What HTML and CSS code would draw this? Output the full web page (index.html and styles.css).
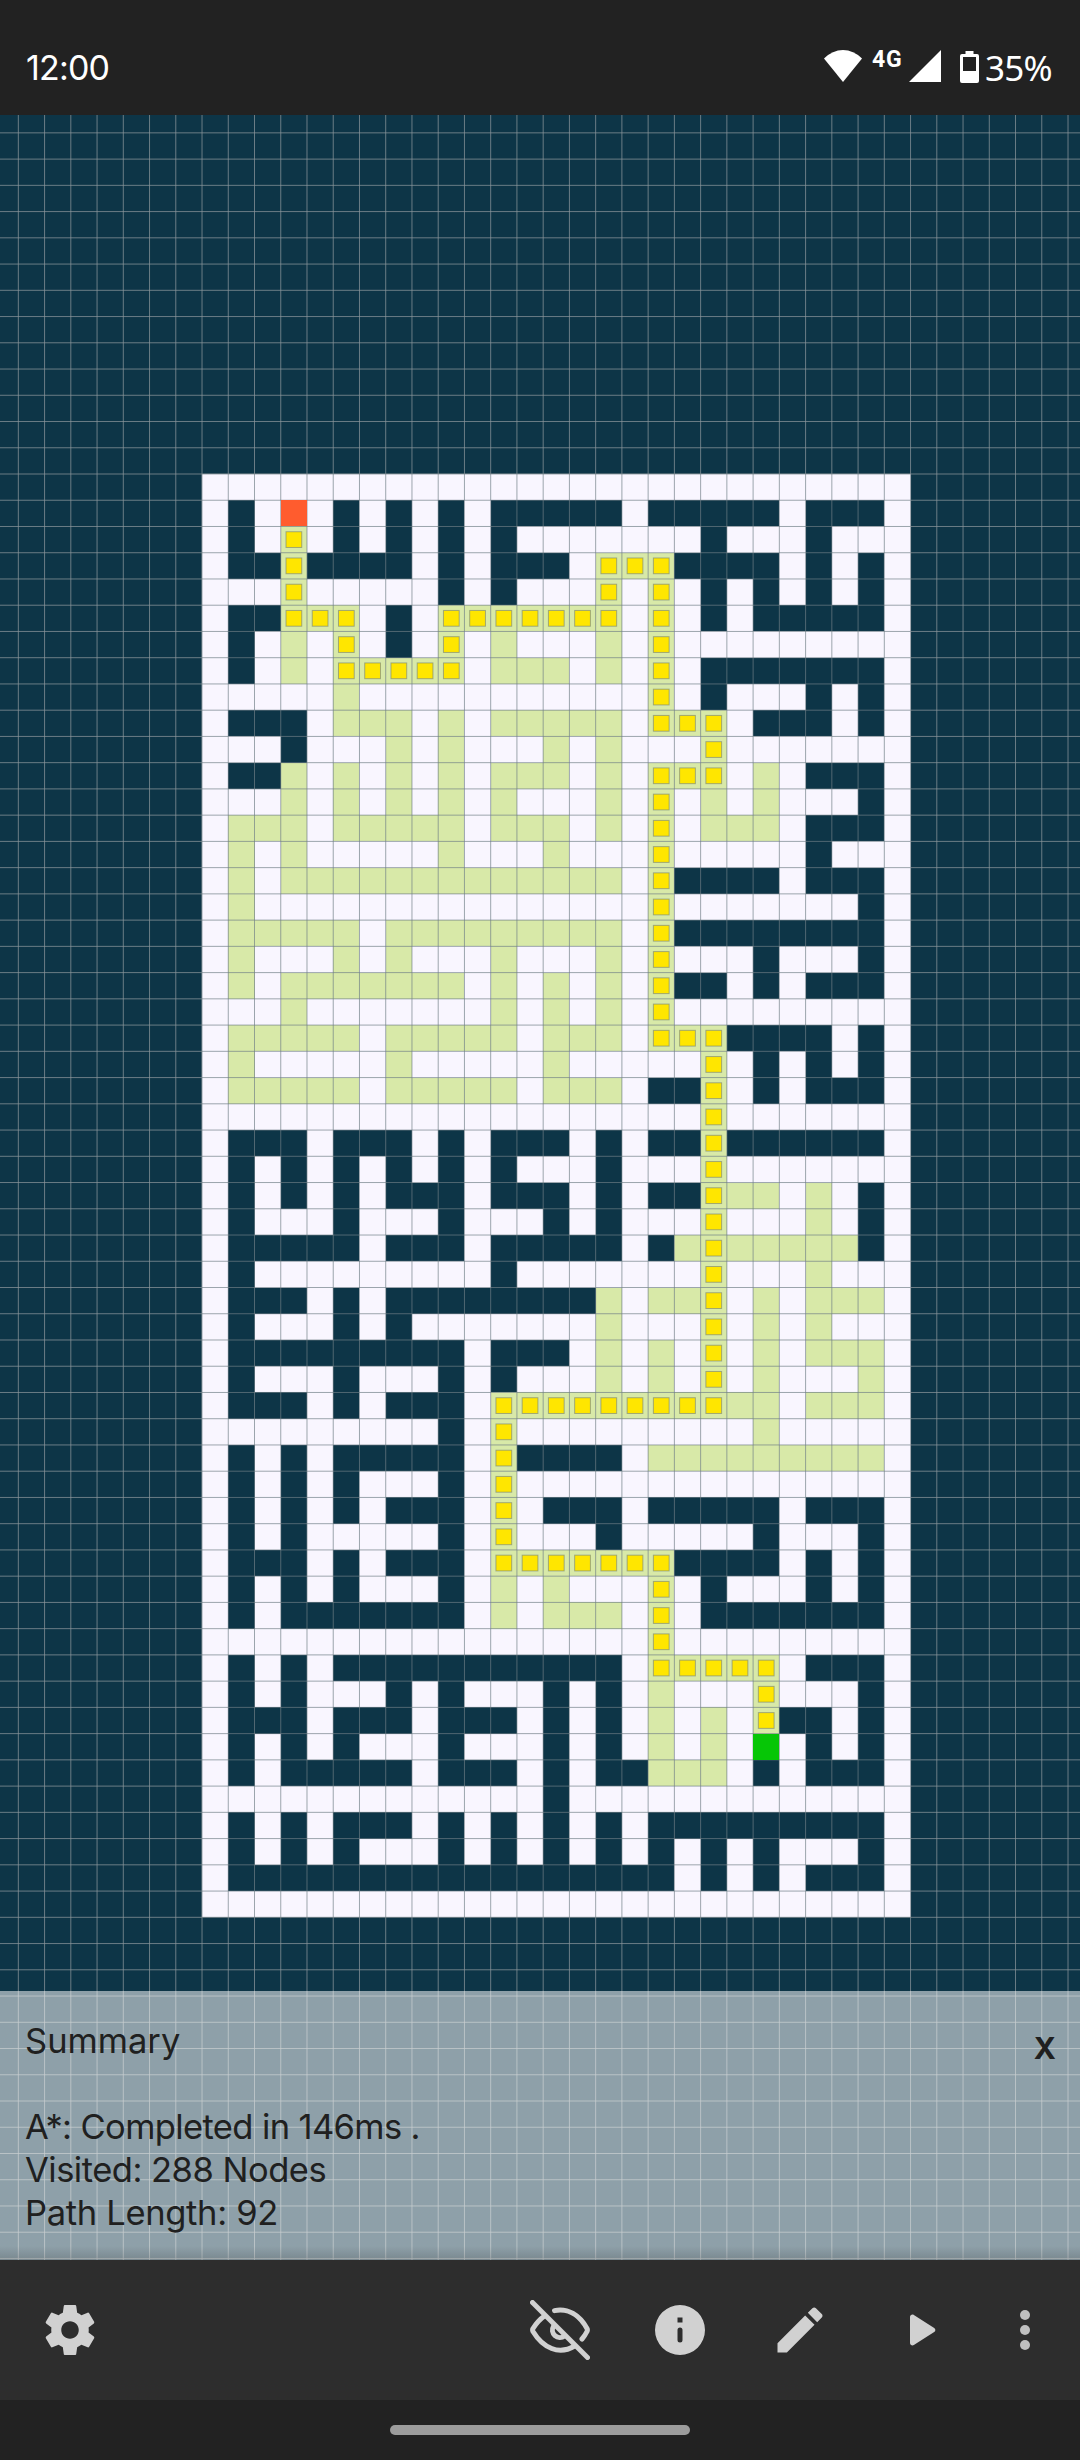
FILE: index.html
```html
<!DOCTYPE html>
<html lang="en">
<head>
<meta charset="utf-8">
<title>Pathfinder</title>
<link rel="stylesheet" href="styles.css">
</head>
<body>
<header class="status">
  <span class="clock">12:00</span>
  <div class="indicators">
    <svg class="wifi" width="38" height="32" viewBox="0 0 38 32"><path d="M0 8.500Q8.500 0 19 0Q29.500 0 38 8.500L19 32Z"/></svg>
    <span class="net">4G</span>
    <svg class="signal" width="32" height="32" viewBox="0 0 32 32"><path d="M32 0V32H0Z"/></svg>
    <svg class="battery" width="19" height="32" viewBox="0 0 19 32"><path fill-rule="evenodd" d="M5.500 0H13.500V3H17Q19 3 19 5V30Q19 32 17 32H2Q0 32 0 30V5Q0 3 2 3H5.500ZM3 6V20H16V6Z"/></svg>
    <span class="level">35%</span>
  </div>
</header>
<main class="stage">
  <svg class="board" id="board" width="1080" height="2145" viewBox="0 115 1080 2145"></svg>
  <section class="summary">
    <div class="heading"><h1>Summary</h1><button class="close">X</button></div>
    <p class="result">A*: Completed in 146ms .</p>
    <p class="visits">Visited: 288 Nodes</p>
    <p class="length">Path Length: 92</p>
  </section>
</main>
<nav class="toolbar">
  <svg class="icon settings" viewBox="0 0 24 24"><path d="M19.430 12.980c.04-.32.07-.64.07-.98s-.03-.66-.07-.98l2.110-1.650c.19-.15.24-.42.12-.64l-2-3.460c-.12-.22-.39-.3-.61-.22l-2.490 1c-.52-.4-1.080-.73-1.690-.98l-.38-2.650C14.460 2.180 14.250 2 14 2h-4c-.25 0-.46.18-.49.42l-.38 2.650c-.61.25-1.170.59-1.690.98l-2.490-1c-.23-.09-.49 0-.61.22l-2 3.460c-.13.22-.07.49.12.64l2.110 1.650c-.04.32-.07.65-.07.98s.03.66.07.98l-2.110 1.650c-.19.15-.24.42-.12.64l2 3.460c.12.22.39.3.61.22l2.490-1c.52.4 1.080.73 1.690.98l.38 2.650c.03.24.24.42.49.42h4c.25 0 .46-.18.49-.42l.38-2.650c.61-.25 1.170-.59 1.690-.98l2.490 1c.23.09.49 0 .61-.22l2-3.460c.12-.22.07-.49-.12-.64l-2.110-1.650zM12 15.500c-1.930 0-3.500-1.570-3.500-3.500s1.570-3.500 3.500-3.500 3.500 1.570 3.500 3.500-1.570 3.500-3.500 3.500z"/></svg>
  <svg class="icon hide" viewBox="0 0 60 60"><g fill="none" stroke="#d1d1d1" stroke-width="5" stroke-linecap="round" stroke-linejoin="round"><path d="M2.500 2.500L57.500 57.500"/><path d="M24.500 10.600C38 8 49.500 15 57 28.500Q57.800 30 57 31.500Q55 35.500 52 39"/><path d="M14.500 16Q8 20.500 3 28.500Q2.200 30 3 31.500C13 48 29 55.500 44.500 46"/><path d="M23.500 26.200A7.500 7.500 0 0 0 34.500 36"/></g></svg>
  <svg class="icon info" viewBox="0 0 24 24"><path fill-rule="evenodd" d="M12 2a10 10 0 1 0 0 20a10 10 0 1 0 0-20ZM11 7h2v2h-2ZM12 11q1 0 1 1v4q0 1-1 1t-1-1v-4q0-1 1-1Z"/></svg>
  <svg class="icon edit" viewBox="0 0 24 24"><path d="M3 17.250V21h3.750L17.810 9.940l-3.750-3.750L3 17.250zM20.710 7.040c.39-.39.39-1.020 0-1.410l-2.340-2.340c-.39-.39-1.020-.39-1.410 0l-1.830 1.830 3.750 3.750 1.830-1.830z"/></svg>
  <svg class="icon play" viewBox="0 0 24 24"><path d="M8 6.820v10.360c0 .79.87 1.270 1.540.84l8.140-5.180c.62-.39.62-1.290 0-1.690L9.540 5.980C8.870 5.550 8 6.030 8 6.820z"/></svg>
  <svg class="icon more" viewBox="0 0 24 24"><circle cx="12" cy="6" r="2"/><circle cx="12" cy="12" r="2"/><circle cx="12" cy="18" r="2"/></svg>
</nav>
<footer class="gesture"><div class="pill"></div></footer>
<script src="board.js"></script>
</body>
</html>
```
FILE: styles.css
```css
* { box-sizing: border-box; margin: 0; padding: 0; }
body {
  display: flex;
  flex-direction: column;
  width: 1080px;
  height: 2460px;
  background: #222;
  font-family: Inter, "Liberation Sans", sans-serif;
  color: #202020;
}
svg { display: block; flex: none; }

.status {
  display: flex;
  justify-content: space-between;
  height: 115px;
  padding: 50px 29px 0 26px;
  color: #fff;
}
.clock { font-size: 34px; line-height: 36px; letter-spacing: -0.8px; }
.indicators { display: flex; align-items: flex-start; }
.indicators svg { fill: #fff; }
.net { width: 31px; margin: 0 6px 0 10px; font: 700 23px/19px Roboto, sans-serif; letter-spacing: .8px; }
.battery { margin: 1px 6px 0 19px; }
.level { width: 66px; font: 400 35px/36px "Noto Sans", sans-serif; letter-spacing: -0.8px; white-space: nowrap; }

.stage { display: grid; height: 2145px; }
.board, .summary { grid-area: 1 / 1; }
.wall { fill: #0d3547; }
.open { fill: #f9f6ff; }
.visited, .path { fill: #d8e9a8; }
.mark { fill: #ffe600; stroke: #6f7f80; stroke-opacity: .6; }
.start { fill: #ff5c2e; }
.goal { fill: #06c606; }
.line { fill: #707f86; fill-opacity: .68; }
.line.back { fill: #8b969b; fill-opacity: .74; }

.summary {
  align-self: end;
  height: 269px;
  padding: 28px 24px 0 25px;
  background: linear-gradient(rgba(40, 40, 40, 0) 255px, rgba(40, 40, 40, .2)) , rgba(255, 255, 255, .535);
  font-size: 34.500px;
  line-height: 43px;
}
.summary p { white-space: pre; }
.result { letter-spacing: -0.62px; }
.visits { letter-spacing: -0.5px; }
.length { letter-spacing: -0.32px; }
.heading { display: flex; justify-content: space-between; height: 86px; }
.heading h1 { font-size: inherit; font-weight: 400; }
.close {
  height: 43px;
  margin-top: 8px;
  border: 0;
  background: none;
  color: #202020;
  font: 700 30px/43px Inter, sans-serif;
}

.toolbar {
  display: flex;
  align-items: center;
  height: 140px;
  padding-left: 40px;
  background: #2d2d2d;
}
.icon { width: 60px; height: 60px; fill: #d1d1d1; }
.hide { margin-left: 430px; }
.info, .edit, .play { margin-left: 60px; }
.more { margin-left: 45px; fill: #bfbfbf; }

.gesture { display: flex; justify-content: center; height: 60px; padding-top: 25px; }
.pill { width: 300px; height: 10px; border-radius: 5px; background: #9c9c9c; }
```
FILE: board.js
```js
// Map legend: # wall, . open, v visited, * path, S start, G goal
const MAP = [
  "...........................",
  ".#.S.#.#.#.#####.#####.###.",
  ".#.*.#.#.#.#.......#...#...",
  ".##*####.#.###.***####.#.#.",
  "...*.....#.#...*.*.#.#.#.#.",
  ".##***.#.*******.*.#.#####.",
  ".#.v.*.#.*.v...v.*.........",
  ".#.v.*****.vvv.v.*.#######.",
  ".....v...........*.#...#.#.",
  ".###.vvv.v.vvvvv.***.###.#.",
  "...#...v.v...v.v...*.......",
  ".##v.v.v.v.vvv.v.***.v.###.",
  "...v.v.v.v.v...v.*.v.v...#.",
  ".vvv.vvvvv.vvv.v.*.vvv.###.",
  ".v.v.....v...v...*.....#...",
  ".v.vvvvvvvvvvvvv.*####.###.",
  ".v...............*.......#.",
  ".vvvvv.vvvvvvvvv.*########.",
  ".v...v.v...v...v.*...#...#.",
  ".v.vvvvvvv.v.v.v.*##.#.###.",
  "...v.......v.v.v.*.........",
  ".vvvvv.vvvvv.vvv.***####.#.",
  ".v.....v.....v.....*.#.#.#.",
  ".vvvvv.vvvvv.vvv.##*.#.###.",
  "...................*.......",
  ".###.###.#.###.#.##*######.",
  ".#.#.#.#.#.#...#...*.......",
  ".#.#.#.###.###.#.##*vv.v.#.",
  ".#...#...#...#.#...*...v.#.",
  ".#####.###.#####.#v*vvvvv#.",
  ".#.........#.......*...v...",
  ".###.#.########v.vv*.v.vvv.",
  ".#...#.#.......v...*.v.v...",
  ".#########.###.v.v.*.v.vvv.",
  ".#...#...#.#...v.v.*.v...v.",
  ".###.#.###.*********vv.vvv.",
  ".........#.*.........v.....",
  ".#.#.#####.*####.vvvvvvvvv.",
  ".#.#.#...#.*...............",
  ".#.#.#.###.*.###.#####.###.",
  ".#.#.....#.*...#.....#...#.",
  ".###.#.###.*******####.#.#.",
  ".#.#.#...#.v.v...*.#...#.#.",
  ".#.#######.v.vvv.*.#######.",
  ".................*.........",
  ".#.#.###########.*****.###.",
  ".#.#...#.#...#.#.v...*...#.",
  ".###.###.###.#.#.v.v.*##.#.",
  ".#.#.#...#...#.#.v.v.G.#.#.",
  ".#.#####.###.#.##vvv.#.###.",
  ".............#.............",
  ".#.#.###.#.#.#.#.#########.",
  ".#.#.#...#.#.#.#.#.#.#...#.",
  ".#################.#.#.###.",
  "..........................."
];
const KINDS = { "#": "wall", ".": "open", v: "visited", "*": "path", S: "start", G: "goal" };
const CELL = 26.242, LEFT = 202.02, TOP = 474;
const COLS = MAP[0].length, ROWS = MAP.length;
const px = n => n.toFixed(2);
const rect = (cls, x, y, w, h) =>
  `<rect class="${cls}" x="${px(x)}" y="${px(y)}" width="${px(w)}" height="${px(h)}"/>`;

let out = rect("wall", 0, 115, 1080, 2145);
for (let i = -7; LEFT + i * CELL < 1080; i++) out += rect("line back", LEFT + i * CELL - .5, 115, 1, 2145);
for (let j = -13; TOP + j * CELL < 2260; j++) out += rect("line back", 0, TOP + j * CELL - .5, 1080, 1);

// Cell edges snap to whole pixels so that neighbours meet without seams.
const snapX = c => Math.round(LEFT + c * CELL), snapY = r => Math.round(TOP + r * CELL);
const cell = (kind, c, r) => rect(kind, snapX(c), snapY(r), snapX(c + 1) - snapX(c), snapY(r + 1) - snapY(r));
let marks = "";
MAP.forEach((row, r) => [...row].forEach((ch, c) => {
  out += cell(KINDS[ch], c, r);
  if (ch === "S" || ch === "G") marks += cell(KINDS[ch], c, r);
  if (ch === "*") marks += rect("mark", LEFT + (c + .2) * CELL, TOP + (r + .2) * CELL, CELL * .6, CELL * .6);
}));
for (let i = 0; i <= COLS; i++) out += rect("line", LEFT + i * CELL - .5, TOP, 1, ROWS * CELL);
for (let j = 0; j <= ROWS; j++) out += rect("line", LEFT, TOP + j * CELL - .5, COLS * CELL, 1);
document.getElementById("board").innerHTML = out + marks;
```
